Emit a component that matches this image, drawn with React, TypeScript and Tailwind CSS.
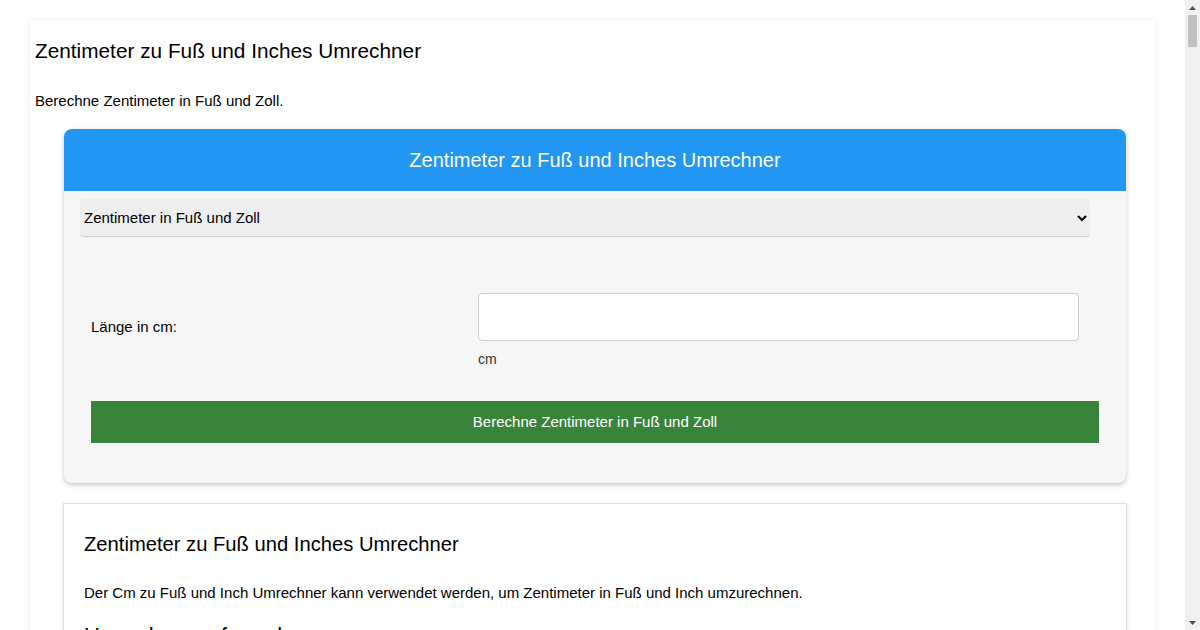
import { useState } from 'react'

const font = { fontFamily: '"Liberation Sans", Arial, sans-serif' }

function Scrollbar() {
  return (
    <div className="flex h-full w-[15px] shrink-0 flex-col items-center bg-[#f1f1f1]">
      <div className="flex h-[15px] w-full items-center justify-center">
        <svg width="7" height="4" viewBox="0 0 7 4">
          <path d="M3.5 0L7 4H0z" fill="#505050" />
        </svg>
      </div>
      <div className="h-[32px] w-[9px] bg-[#c1c1c1]" />
      <div className="flex-1" />
      <div className="flex h-[15px] w-full items-center justify-center">
        <svg width="7" height="4" viewBox="0 0 7 4">
          <path d="M0 0H7L3.5 4z" fill="#505050" />
        </svg>
      </div>
    </div>
  )
}

export default function App() {
  const [mode, setMode] = useState('cm-ft-in')
  const [cm, setCm] = useState('')

  return (
    <div className="flex h-screen overflow-hidden bg-white text-black" style={font}>
      <div className="min-w-0 flex-1 overflow-hidden">
        <div className="mx-[30px] mt-[20px] bg-white pb-10 pl-[5px] shadow-[0_0_6px_rgba(0,0,0,0.08)]">
          <h1 className="pt-[19px] text-[20.8px] leading-[24px] font-normal">
            Zentimeter zu Fuß und Inches Umrechner
          </h1>
          <p className="mt-[29px] text-[15px] leading-[17px]">Berechne Zentimeter in Fuß und Zoll.</p>

          {/* Calculator */}
          <div className="mx-auto mt-[20px] w-[1062px] overflow-hidden rounded-lg bg-[#f6f6f6] pb-[40px] shadow-[0_2px_5px_rgba(0,0,0,0.22)]">
            <div className="flex h-[62px] items-center justify-center bg-[#2196f3] pb-[1px] text-[20px] text-white">
              Zentimeter zu Fuß und Inches Umrechner
            </div>

            <div className="pl-[16px] pt-[8px]">
              <select
                value={mode}
                onChange={(e) => setMode(e.target.value)}
                className="h-[38px] w-[1010px] rounded border-b border-[#cccccc] bg-[#eeeeee] pl-0 pr-[4px] text-[15px] text-black"
                style={font}
              >
                <option value="cm-ft-in">Zentimeter in Fuß und Zoll</option>
                <option value="ft-in-cm">Fuß und Zoll in Zentimeter</option>
              </select>
            </div>

            <div className="mt-[56px] flex px-[27px]">
              <div className="w-[387px] pt-[25px] text-[15px] leading-[17px]">Länge in cm:</div>
              <div>
                <input
                  type="text"
                  value={cm}
                  onChange={(e) => setCm(e.target.value)}
                  className="block h-[48px] w-[601px] rounded border border-[#cccccc] bg-white px-3 text-[15px]"
                  style={font}
                />
                <div className="mt-[10px] text-[14px] leading-[17px] text-[#333333]">cm</div>
              </div>
            </div>

            <button className="mx-[27px] mt-[33px] flex h-[42px] w-[1008px] items-center justify-center bg-[#3a833a] text-[15px] text-white">
              Berechne Zentimeter in Fuß und Zoll
            </button>
          </div>

          {/* Info */}
          <div className="mx-auto mt-[20px] w-[1064px] border border-[#dddddd] bg-white px-[20px] pt-[29px] pb-6 shadow-[0_2px_5px_rgba(0,0,0,0.12)]">
            <h2 className="text-[20.2px] leading-[23px]">Zentimeter zu Fuß und Inches Umrechner</h2>
            <p className="mt-[28px] text-[15px] leading-[17px]">
              Der Cm zu Fuß und Inch Umrechner kann verwendet werden, um Zentimeter in Fuß und Inch umzurechnen.
            </p>
            <h2 className="mt-[22px] text-[22px] leading-[26px]">Umrechnungsformel</h2>
            <p className="mt-[16px] text-[15px] leading-[22px]">
              1 Zoll = 2,54 cm und 1 Fuß = 12 Zoll = 30,48 cm. Um Zentimeter in Fuß umzurechnen, teilt man die Länge in
              Zentimetern durch 30,48.
            </p>
          </div>
        </div>
      </div>
      <Scrollbar />
    </div>
  )
}
